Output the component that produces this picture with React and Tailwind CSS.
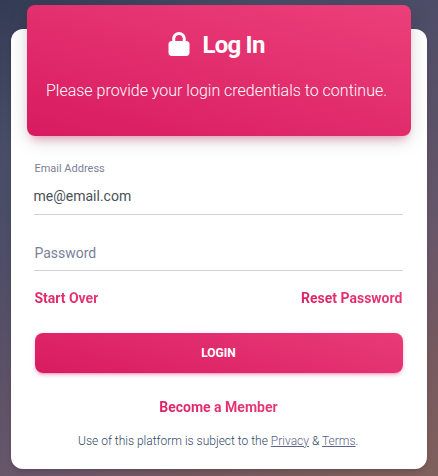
import { FaLock } from 'react-icons/fa6'

const TextLink = ({ children }) => (
  <a
    href="#"
    className="bg-[linear-gradient(195deg,#ec407a,#d81b60)] bg-clip-text text-sm leading-[21px] font-bold text-transparent"
  >
    {children}
  </a>
)

const CardHeader = () => (
  <div className="mx-4 -mt-6 h-[131px] rounded-lg bg-[linear-gradient(195deg,#ec407a,#d81b60)] text-center text-white shadow-[0_4px_20px_rgba(0,0,0,0.14),0_7px_10px_-5px_rgba(233,30,99,0.4)]">
    <h1 className="flex items-center justify-center gap-3 pt-6 pr-[5px] text-2xl leading-8 font-bold tracking-[-0.75px]">
      <FaLock className="-mt-0.5 h-6 w-[22px]" />
      Log In
    </h1>
    <p className="mt-[18px] pr-[5px] text-base leading-6 font-light">
      Please provide your login credentials to continue.
    </p>
  </div>
)

export default function App() {
  return (
    <div className="h-[476px] w-[438px] bg-[linear-gradient(150deg,#343b55_0%,#484d67_20%,#4d4d68_35%,#5a5166_50%,#67566a_65%,#75595f_82%,#80605c_100%)] px-[11px] pt-[29px] font-['Roboto',sans-serif]">
      <div className="flow-root h-[440px] rounded-xl bg-white shadow-[0_4px_6px_-1px_rgba(0,0,0,0.1),0_2px_4px_-1px_rgba(0,0,0,0.06)]">
        <CardHeader />

        <form className="px-6 pt-[25px]">
          {/* Fields */}
          <div className="-ml-px h-[54px] border-b border-[#d2d2d2]">
            <label className="block pl-[0.4px] text-[11px] leading-4 text-[#7b809a]">Email Address</label>
            <div className="mt-[7px] -ml-[0.5px] text-sm leading-6 text-[#495057]">me@email.com</div>
          </div>
          <div className="-ml-px h-14 border-b border-[#d2d2d2] pt-[26px] pl-[0.4px] text-sm leading-6 text-[#7b809a]">
            Password
          </div>

          <div className="mt-[17px] -ml-[0.6px] flex justify-between pr-[0.6px]">
            <TextLink>Start Over</TextLink>
            <TextLink>Reset Password</TextLink>
          </div>

          <button
            type="button"
            className="mt-6 block h-10 w-full rounded-lg bg-[linear-gradient(195deg,#e93b77,#d81b60)] pr-px text-xs font-bold text-white shadow-[0_3px_3px_rgba(233,30,99,0.15),0_3px_1px_-2px_rgba(233,30,99,0.2),0_1px_5px_rgba(233,30,99,0.15)]"
          >
            LOGIN
          </button>

          <div className="mt-6 flex justify-center pr-[1.2px]">
            <TextLink>Become a Member</TextLink>
          </div>
          <p className="mt-[15px] pr-[1.5px] text-center text-xs leading-4 font-light text-[#344767]">
            Use of this platform is subject to the{' '}
            <a href="#" className="text-[#5c6388] underline">Privacy</a> &amp;{' '}
            <a href="#" className="text-[#5c6388] underline">Terms</a>.
          </p>
        </form>
      </div>
    </div>
  )
}
